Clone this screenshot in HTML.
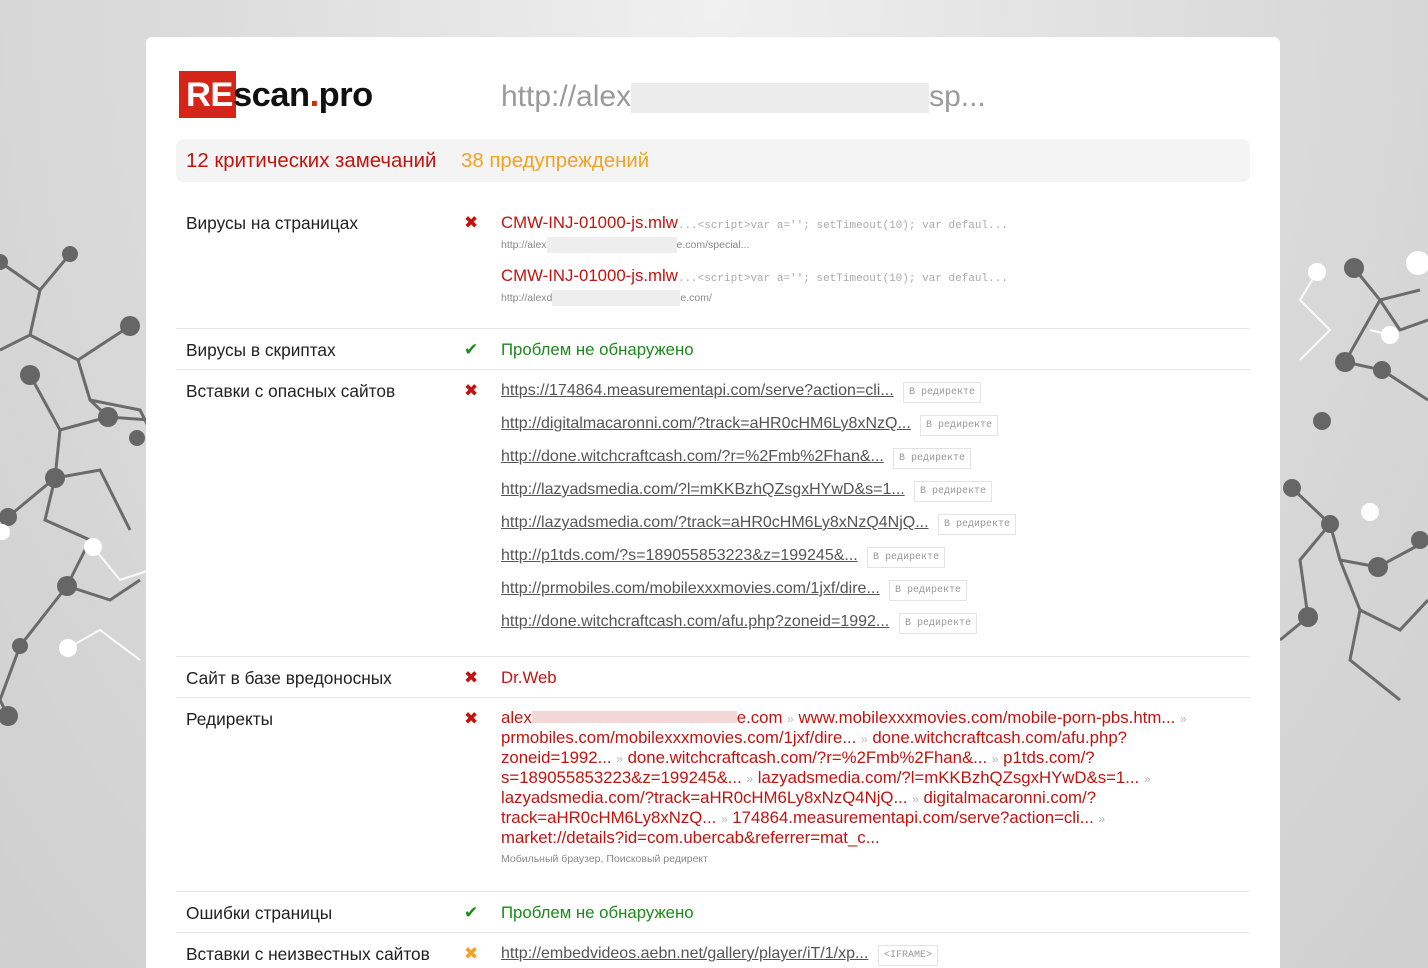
<!DOCTYPE html>
<html><head><meta charset="utf-8"><style>
*{margin:0;padding:0;box-sizing:border-box}
html,body{width:1428px;height:968px;overflow:hidden}
body{position:relative;font-family:"Liberation Sans","DejaVu Sans",sans-serif;background:radial-gradient(ellipse at 50% 0%,#f0f0f0 0%,#dcdcdc 50%,#cfcfcf 100%)}
#bg{position:absolute;left:0;top:0}
.card{position:absolute;left:146px;top:37px;width:1134px;height:931px;background:#fff;border-radius:6px 6px 0 0}
.a{position:absolute;white-space:nowrap}
.lbl{font-size:17.3px;color:#222}
.red{color:#c0150f}
.grn{color:#1b8a1b}
.ic{font-size:17px;font-weight:bold}
.lnk{font-size:16px;color:#555;text-decoration:underline}
.tag{position:absolute;font-family:"Liberation Mono",monospace;font-size:10px;color:#999;border:1px solid #e4e4e4;padding:4px 5px;white-space:nowrap}
.code{font-family:"Liberation Mono",monospace;font-size:11px;color:#aaa}
.small{font-size:10.5px;color:#888}
.hr{position:absolute;left:176px;width:1074px;height:1px;background:#e8e8e8}
.blur{display:inline-block;background:#e6e6e6;vertical-align:middle}
.rd{font-size:16.8px;color:#c0150f;line-height:20px}
.rd i{font-style:normal;color:#bbb;font-size:12px;line-height:0}
.rd .blur{height:12px;vertical-align:baseline}
</style></head><body>
<svg id="bg" width="1428" height="968">
<g stroke="#6b6b6b" stroke-width="3" fill="none">
<polyline points="0,262 40,290 70,254"/><polyline points="40,290 30,335 0,350"/><polyline points="30,335 78,360 130,326"/><polyline points="78,360 90,400 108,417 60,430 30,375"/><polyline points="90,400 140,410 160,450"/><polyline points="108,417 150,420"/><polyline points="60,430 55,478 8,517"/><polyline points="55,478 100,470 130,530"/><polyline points="55,478 45,520 90,540 67,586 20,646"/><polyline points="67,586 110,600 140,580"/><polyline points="20,646 0,700 8,716"/>
<polyline points="1354,268 1380,300 1400,330 1428,320"/><polyline points="1380,300 1345,362"/><polyline points="1345,362 1382,370 1428,400"/><polyline points="1380,300 1420,290"/><polyline points="1292,488 1330,524 1340,560 1378,567 1428,540"/><polyline points="1330,524 1300,560 1308,617"/><polyline points="1340,560 1360,610 1400,630 1428,600"/><polyline points="1308,617 1280,640"/><polyline points="1360,610 1350,660 1400,700"/>
</g>
<g stroke="#fff" stroke-width="2" fill="none" opacity=".9">
<polyline points="93,547 120,580 150,570"/><polyline points="68,648 100,630 140,660"/><polyline points="1317,272 1300,300 1330,330 1300,360"/><polyline points="1390,335 1370,330"/>
</g>
<g fill="#666">
<circle cx="70" cy="254" r="8"/><circle cx="130" cy="326" r="10"/><circle cx="30" cy="375" r="10"/><circle cx="108" cy="417" r="10"/><circle cx="55" cy="478" r="10"/><circle cx="8" cy="517" r="9"/><circle cx="67" cy="586" r="10"/><circle cx="20" cy="646" r="8"/><circle cx="8" cy="716" r="10"/><circle cx="0" cy="262" r="8"/><circle cx="137" cy="438" r="8"/>
<circle cx="1354" cy="268" r="10"/><circle cx="1345" cy="362" r="10"/><circle cx="1382" cy="370" r="9"/><circle cx="1292" cy="488" r="9"/><circle cx="1330" cy="524" r="9"/><circle cx="1378" cy="567" r="10"/><circle cx="1308" cy="617" r="10"/><circle cx="1322" cy="421" r="9"/><circle cx="1420" cy="540" r="9"/>
</g>
<g fill="#fff"><circle cx="93" cy="547" r="9"/><circle cx="68" cy="648" r="9"/><circle cx="2" cy="532" r="8"/><circle cx="1317" cy="272" r="9"/><circle cx="1418" cy="263" r="12"/><circle cx="1390" cy="335" r="9"/><circle cx="1370" cy="512" r="9"/></g>
</svg>
<div class="card"></div>
<div class="a" style="left:179px;top:71px;width:57px;height:47px;background:#d42518"></div>
<div class="a" style="left:186px;top:76px;font-size:34.5px;font-weight:bold;letter-spacing:-0.5px"><span style="color:#fff">RE</span><span style="color:#111">scan</span><span style="color:#d42518">.</span><span style="color:#111">pro</span></div>
<div class="a" style="left:501px;top:80px;font-size:30px;color:#9a9a9a">http://alex<span class="blur" style="width:298px;height:30px;background:#ececec"></span>sp...</div>
<div class="a" style="left:176px;top:139px;width:1074px;height:43px;background:#f4f4f4;border-radius:8px"></div>
<div class="a red" style="left:186px;top:150px;font-size:20.4px">12 критических замечаний</div>
<div class="a" style="left:461px;top:150px;font-size:20.4px;color:#f2a225">38 предупреждений</div>

<div class="a lbl" style="left:186px;top:213px">Вирусы на страницах</div>
<div class="a ic red" style="left:464px;top:213px">✖</div>
<div class="a" style="left:501px;top:213px"><span class="red" style="font-size:16.8px">CMW-INJ-01000-js.mlw</span><span class="code">...&lt;script&gt;var a=''; setTimeout(10); var defaul...</span></div>
<div class="a small" style="left:501px;top:237px">http://alex<span class="blur" style="width:130px;height:16px;background:#eee"></span>e.com/special...</div>
<div class="a" style="left:501px;top:266px"><span class="red" style="font-size:16.8px">CMW-INJ-01000-js.mlw</span><span class="code">...&lt;script&gt;var a=''; setTimeout(10); var defaul...</span></div>
<div class="a small" style="left:501px;top:290px">http://alexd<span class="blur" style="width:128px;height:16px;background:#eee"></span>e.com/</div>
<div class="hr" style="top:328px"></div>

<div class="a lbl" style="left:186px;top:340px">Вирусы в скриптах</div>
<div class="a ic grn" style="left:464px;top:340px">✔</div>
<div class="a grn" style="left:501px;top:340px;font-size:16.8px">Проблем не обнаружено</div>
<div class="hr" style="top:369px"></div>

<div class="a lbl" style="left:186px;top:381px">Вставки с опасных сайтов</div>
<div class="a ic red" style="left:464px;top:381px">✖</div>
<div class="a lnk" style="left:501px;top:382px">https://174864.measurementapi.com/serve?action=cli...</div><div class="tag" style="left:903px;top:382px">В редиректе</div>
<div class="a lnk" style="left:501px;top:415px">http://digitalmacaronni.com/?track=aHR0cHM6Ly8xNzQ...</div><div class="tag" style="left:920px;top:415px">В редиректе</div>
<div class="a lnk" style="left:501px;top:448px">http://done.witchcraftcash.com/?r=%2Fmb%2Fhan&amp;...</div><div class="tag" style="left:893px;top:448px">В редиректе</div>
<div class="a lnk" style="left:501px;top:481px">http://lazyadsmedia.com/?l=mKKBzhQZsgxHYwD&amp;s=1...</div><div class="tag" style="left:914px;top:481px">В редиректе</div>
<div class="a lnk" style="left:501px;top:514px">http://lazyadsmedia.com/?track=aHR0cHM6Ly8xNzQ4NjQ...</div><div class="tag" style="left:938px;top:514px">В редиректе</div>
<div class="a lnk" style="left:501px;top:547px">http://p1tds.com/?s=189055853223&amp;z=199245&amp;...</div><div class="tag" style="left:867px;top:547px">В редиректе</div>
<div class="a lnk" style="left:501px;top:580px">http://prmobiles.com/mobilexxxmovies.com/1jxf/dire...</div><div class="tag" style="left:889px;top:580px">В редиректе</div>
<div class="a lnk" style="left:501px;top:613px">http://done.witchcraftcash.com/afu.php?zoneid=1992...</div><div class="tag" style="left:899px;top:613px">В редиректе</div>
<div class="hr" style="top:656px"></div>

<div class="a lbl" style="left:186px;top:668px">Сайт в базе вредоносных</div>
<div class="a ic red" style="left:464px;top:668px">✖</div>
<div class="a red" style="left:501px;top:668px;font-size:16.8px">Dr.Web</div>
<div class="hr" style="top:697px"></div>

<div class="a lbl" style="left:186px;top:709px">Редиректы</div>
<div class="a ic red" style="left:464px;top:709px">✖</div>
<div class="a rd" style="left:501px;top:708px">alex<span class="blur" style="width:205px;background:#f3d6d6"></span>e.com <i>»</i> www.mobilexxxmovies.com/mobile-porn-pbs.htm... <i>»</i><br>prmobiles.com/mobilexxxmovies.com/1jxf/dire... <i>»</i> done.witchcraftcash.com/afu.php?<br>zoneid=1992... <i>»</i> done.witchcraftcash.com/?r=%2Fmb%2Fhan&amp;... <i>»</i> p1tds.com/?<br>s=189055853223&amp;z=199245&amp;... <i>»</i> lazyadsmedia.com/?l=mKKBzhQZsgxHYwD&amp;s=1... <i>»</i><br>lazyadsmedia.com/?track=aHR0cHM6Ly8xNzQ4NjQ... <i>»</i> digitalmacaronni.com/?<br>track=aHR0cHM6Ly8xNzQ... <i>»</i> 174864.measurementapi.com/serve?action=cli... <i>»</i><br>market://details?id=com.ubercab&amp;referrer=mat_c...</div>
<div class="a small" style="left:501px;top:853px">Мобильный браузер, Поисковый редирект</div>
<div class="hr" style="top:891px"></div>

<div class="a lbl" style="left:186px;top:903px">Ошибки страницы</div>
<div class="a ic grn" style="left:464px;top:903px">✔</div>
<div class="a grn" style="left:501px;top:903px;font-size:16.8px">Проблем не обнаружено</div>
<div class="hr" style="top:932px"></div>

<div class="a lbl" style="left:186px;top:944px">Вставки с неизвестных сайтов</div>
<div class="a ic" style="left:464px;top:944px;color:#f2a225">✖</div>
<div class="a lnk" style="left:501px;top:945px">http://embedvideos.aebn.net/gallery/player/iT/1/xp...</div><div class="tag" style="left:878px;top:945px">&lt;IFRAME&gt;</div>
</body></html>
